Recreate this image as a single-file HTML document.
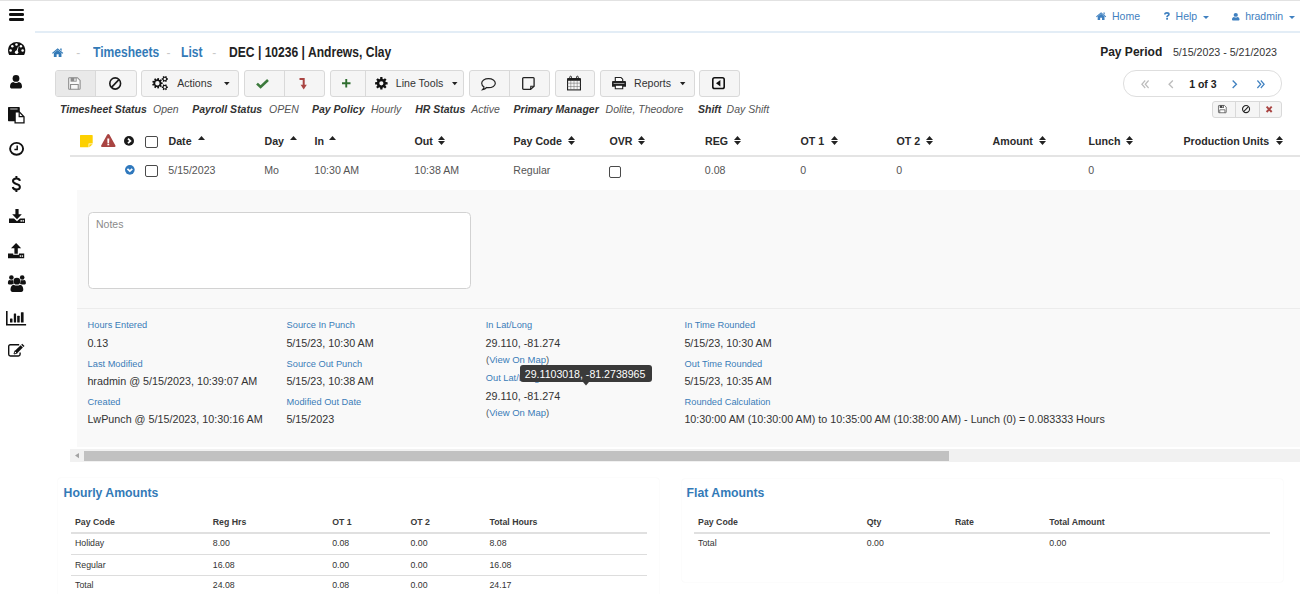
<!DOCTYPE html>
<html><head><meta charset="utf-8"><style>
html,body{margin:0;padding:0;width:1300px;height:594px;overflow:hidden;background:#fff;font-family:"Liberation Sans", sans-serif;}
.t{position:absolute;white-space:pre;line-height:normal;}
.r{position:absolute;box-sizing:border-box;}
.i{position:absolute;overflow:visible;}
</style></head><body>
<div class="r" style="left:0.00px;top:0.00px;width:1300.00px;height:1.00px;background:#e2e2e2"></div>
<div class="r" style="left:35.00px;top:31.00px;width:1265.00px;height:2.00px;background:#e3edf6"></div>
<div class="r" style="left:9.20px;top:8.50px;width:14.70px;height:2.60px;background:#111;border-radius:1.3px"></div>
<div class="r" style="left:9.20px;top:13.30px;width:14.70px;height:2.60px;background:#111;border-radius:1.3px"></div>
<div class="r" style="left:9.20px;top:18.20px;width:14.70px;height:2.60px;background:#111;border-radius:1.3px"></div>
<svg class="i" style="left:8.00px;top:42.20px;width:17.30px;height:13.00px;" viewBox="0 0 17.3 13" preserveAspectRatio="none"><path fill="#111" d="M1.2,13 C-0.6,9.8 -0.4,5.2 2.4,2.5 C4.2,0.8 6.4,0 8.65,0 C10.9,0 13.1,0.8 14.9,2.5 C17.7,5.2 17.9,9.8 16.1,13 Z"/><circle cx="2.6" cy="8.5" r="1.25" fill="#fff"/><circle cx="4.3" cy="4.3" r="1.25" fill="#fff"/><circle cx="8.5" cy="2.5" r="1.25" fill="#fff"/><circle cx="12.9" cy="4.3" r="1.25" fill="#fff"/><circle cx="14.6" cy="8.5" r="1.25" fill="#fff"/><circle cx="8.6" cy="10.3" r="1.7" fill="#fff"/><path fill="#fff" d="M7.9,10.2 L10.1,4.4 L10.6,4.6 L9.4,10.6 Z"/></svg>
<svg class="i" style="left:10.40px;top:75.00px;width:12.00px;height:13.60px;" viewBox="0 0 12 13.6" preserveAspectRatio="none"><circle cx="6" cy="3.4" r="3.4" fill="#111"/><path fill="#111" d="M0,11.6 C0,8.8 1.4,7.2 3.2,7.0 C4.2,7.7 5.0,7.9 6,7.9 C7,7.9 7.8,7.7 8.8,7.0 C10.6,7.2 12,8.8 12,11.6 C12,13.0 11.2,13.6 10,13.6 L2,13.6 C0.8,13.6 0,13.0 0,11.6 Z"/></svg>
<svg class="i" style="left:8.10px;top:107.10px;width:16.60px;height:16.50px;" viewBox="0 0 16.6 16.5" preserveAspectRatio="none"><path fill="#111" d="M0,1 C0,0.4 0.4,0 1,0 L10.8,0 C11.4,0 11.8,0.4 11.8,1 L11.8,14.3 L1,14.3 C0.4,14.3 0,13.9 0,13.3 Z"/><rect x="2.2" y="1.3" width="7.4" height="1.4" fill="#999"/><path fill="#fff" stroke="#111" stroke-width="1.3" d="M7.1,4.9 L11.3,4.9 L16.0,9.8 L16.0,15.9 L7.1,15.9 Z"/><path fill="none" stroke="#111" stroke-width="1.2" d="M11.2,5.1 L11.2,9.6 L15.8,9.6"/></svg>
<svg class="i" style="left:8.80px;top:142.20px;width:15.20px;height:13.60px;" viewBox="0 0 15.2 13.6" preserveAspectRatio="none"><ellipse cx="7.6" cy="6.8" rx="6.5" ry="5.9" fill="none" stroke="#111" stroke-width="1.9"/><path fill="none" stroke="#111" stroke-width="1.5" d="M8.2,3.4 L8.2,7.6 L5.4,7.6"/></svg>
<svg class="i" style="left:12.00px;top:175.80px;width:8.80px;height:16.00px;" viewBox="0 0 8.8 16" preserveAspectRatio="none"><path fill="none" stroke="#111" stroke-width="2.0" d="M7.9,4.9 C7.6,3.3 6.3,2.5 4.4,2.5 C2.4,2.5 1.0,3.5 1.0,5.1 C1.0,6.9 2.6,7.5 4.4,8.0 C6.4,8.5 7.9,9.2 7.9,11.0 C7.9,12.7 6.5,13.6 4.4,13.6 C2.4,13.6 1.1,12.7 0.8,11.0 M4.4,0 L4.4,2.6 M4.4,13.5 L4.4,16"/></svg>
<svg class="i" style="left:8.80px;top:208.60px;width:16.00px;height:14.10px;" viewBox="0 0 16 14.1" preserveAspectRatio="none"><path fill="#111" d="M6.4,0 L9.6,0 L9.6,5.2 L12.8,5.2 L8,10.2 L3.2,5.2 L6.4,5.2 Z"/><path fill="#111" d="M0,9.6 L5.0,9.6 L8,12.2 L11,9.6 L16,9.6 L16,14.1 L0,14.1 Z"/><circle cx="12.2" cy="11.9" r="0.8" fill="#fff"/><circle cx="14.2" cy="11.9" r="0.8" fill="#fff"/></svg>
<svg class="i" style="left:8.30px;top:242.70px;width:16.20px;height:15.30px;" viewBox="0 0 16.2 15.3" preserveAspectRatio="none"><path fill="#111" d="M8.1,0 L13.2,5.2 L9.8,5.2 L9.8,10.8 L6.4,10.8 L6.4,5.2 L3,5.2 Z"/><path fill="#111" d="M0,10.4 L5.2,10.4 L5.2,11.8 L11,11.8 L11,10.4 L16.2,10.4 L16.2,15.3 L0,15.3 Z"/><circle cx="12.4" cy="13.1" r="0.8" fill="#fff"/><circle cx="14.4" cy="13.1" r="0.8" fill="#fff"/></svg>
<svg class="i" style="left:6.60px;top:274.40px;width:19.20px;height:17.90px;" viewBox="0 0 19.2 17.9" preserveAspectRatio="none"><circle cx="9.9" cy="7.2" r="3.4" fill="#111"/><circle cx="4.4" cy="3.5" r="2.3" fill="#111"/><circle cx="15.2" cy="3.5" r="2.3" fill="#111"/><path fill="#111" d="M3.5,15.6 C3.5,12.6 4.8,10.9 6.6,10.7 C7.6,11.3 8.7,11.6 9.9,11.6 C11.1,11.6 12.2,11.3 13.2,10.7 C15,10.9 16.3,12.6 16.3,15.6 C16.3,17.2 15.5,17.9 14.2,17.9 L5.6,17.9 C4.3,17.9 3.5,17.2 3.5,15.6 Z"/><path fill="#111" d="M0.9,9.0 C0.9,7.2 1.6,6.0 2.6,6.0 C3.2,6.3 3.9,6.4 4.6,6.3 C5.2,6.2 5.6,6.1 6.0,5.9 C6.0,7.4 6.3,8.6 7.0,9.6 C6.2,9.9 5.6,10.2 5.1,10.4 L2.0,10.4 C1.3,10.4 0.9,9.9 0.9,9.0 Z"/><path fill="#111" d="M18.9,9.0 C18.9,7.2 18.2,6.0 17.2,6.0 C16.6,6.3 15.9,6.4 15.2,6.3 C14.6,6.2 14.2,6.1 13.8,5.9 C13.8,7.4 13.5,8.6 12.8,9.6 C13.6,9.9 14.2,10.2 14.7,10.4 L17.8,10.4 C18.5,10.4 18.9,9.9 18.9,9.0 Z"/></svg>
<svg class="i" style="left:6.20px;top:310.50px;width:20.10px;height:14.50px;" viewBox="0 0 20.1 14.5" preserveAspectRatio="none"><path fill="#111" d="M0,0 L1.6,0 L1.6,12.9 L20.1,12.9 L20.1,14.5 L0,14.5 Z"/><rect x="4.0" y="7.4" width="2.5" height="4.2" rx="0.5" fill="#111"/><rect x="7.8" y="2.6" width="2.3" height="9.0" rx="0.5" fill="#111"/><rect x="11.2" y="4.8" width="2.5" height="6.8" rx="0.5" fill="#111"/><rect x="14.9" y="1.3" width="2.7" height="10.3" rx="0.5" fill="#111"/></svg>
<svg class="i" style="left:8.10px;top:344.30px;width:16.60px;height:12.70px;" viewBox="0 0 16.6 12.7" preserveAspectRatio="none"><path fill="none" stroke="#111" stroke-width="1.4" d="M11.2,0.7 L2.4,0.7 C1.3,0.7 0.7,1.3 0.7,2.4 L0.7,10.3 C0.7,11.4 1.3,12 2.4,12 L10.4,12 C11.5,12 12.1,11.4 12.1,10.3 L12.1,8.4"/><path fill="#fff" stroke="#111" stroke-width="0.9" d="M9.15,9.14 L6.91,6.86 L6.0,10.0 Z"/><path fill="#111" d="M9.15,9.14 L14.87,3.55 L12.63,1.27 L6.91,6.86 Z"/><path fill="#111" d="M15.44,2.99 L16.51,1.94 L14.27,-0.34 L13.2,0.71 Z"/></svg>
<svg class="i" style="left:1096.00px;top:11.80px;width:10.20px;height:8.10px;" viewBox="0 0 11 9" preserveAspectRatio="none"><path fill="#3f80c0" d="M5.5,0.2 L11,4.9 L10.2,5.7 L5.5,1.7 L0.8,5.7 L0,4.9 Z"/><path fill="#3f80c0" d="M8.0,0.6 L9.4,0.6 L9.4,3.0 L8.0,1.8 Z"/><path fill="#3f80c0" d="M1.8,5.0 L5.5,1.9 L9.2,5.0 L9.2,9 L6.5,9 L6.5,6.3 L4.5,6.3 L4.5,9 L1.8,9 Z"/></svg>
<div class="t" style="left:1112.00px;top:10.10px;font-size:10.5px;font-weight:normal;font-style:normal;color:#3f80c0;">Home</div>
<svg class="i" style="left:1163.80px;top:12.20px;width:5.80px;height:7.70px;" viewBox="0 0 5.8 7.7" preserveAspectRatio="none"><path fill="none" stroke="#3f80c0" stroke-width="1.75" d="M0.9,2.5 C0.9,1.3 1.8,0.9 2.9,0.9 C4.0,0.9 4.9,1.5 4.9,2.4 C4.9,3.5 3.3,3.7 3.1,4.7 L3.1,5.2"/><rect x="2.2" y="6.0" width="1.8" height="1.7" fill="#3f80c0"/></svg>
<div class="t" style="left:1175.60px;top:10.10px;font-size:10.5px;font-weight:normal;font-style:normal;color:#3f80c0;">Help</div>
<svg class="i" style="left:1203.00px;top:16.20px;width:6.00px;height:3.00px;" viewBox="0 0 6 3.4" preserveAspectRatio="none"><path fill="#3f80c0" d="M0,0 L6,0 L3,3.4 Z"/></svg>
<svg class="i" style="left:1232.00px;top:12.60px;width:7.50px;height:7.60px;" viewBox="0 0 12 13.6" preserveAspectRatio="none"><circle cx="6" cy="3.4" r="3.4" fill="#3f80c0"/><path fill="#3f80c0" d="M0,11.6 C0,8.8 1.4,7.2 3.2,7.0 C4.2,7.7 5.0,7.9 6,7.9 C7,7.9 7.8,7.7 8.8,7.0 C10.6,7.2 12,8.8 12,11.6 C12,13.0 11.2,13.6 10,13.6 L2,13.6 C0.8,13.6 0,13.0 0,11.6 Z"/></svg>
<div class="t" style="left:1245.20px;top:10.10px;font-size:10.5px;font-weight:normal;font-style:normal;color:#3f80c0;">hradmin</div>
<svg class="i" style="left:1289.00px;top:16.20px;width:6.00px;height:3.00px;" viewBox="0 0 6 3.4" preserveAspectRatio="none"><path fill="#3f80c0" d="M0,0 L6,0 L3,3.4 Z"/></svg>
<svg class="i" style="left:51.50px;top:47.60px;width:11.30px;height:9.00px;" viewBox="0 0 11 9" preserveAspectRatio="none"><path fill="#337ab7" d="M5.5,0.2 L11,4.9 L10.2,5.7 L5.5,1.7 L0.8,5.7 L0,4.9 Z"/><path fill="#337ab7" d="M8.0,0.6 L9.4,0.6 L9.4,3.0 L8.0,1.8 Z"/><path fill="#337ab7" d="M1.8,5.0 L5.5,1.9 L9.2,5.0 L9.2,9 L6.5,9 L6.5,6.3 L4.5,6.3 L4.5,9 L1.8,9 Z"/></svg>
<div class="t" style="left:76.20px;top:45.74px;font-size:12px;font-weight:normal;font-style:normal;color:#c8c8c8;">-</div>
<div class="t" style="left:93.10px;top:43.81px;font-size:13.91px;font-weight:bold;font-style:normal;color:#337ab7;transform:scaleX(0.8696);transform-origin:0 0;">Timesheets</div>
<div class="t" style="left:166.40px;top:45.74px;font-size:12px;font-weight:normal;font-style:normal;color:#c8c8c8;">-</div>
<div class="t" style="left:181.20px;top:43.81px;font-size:13.91px;font-weight:bold;font-style:normal;color:#337ab7;transform:scaleX(0.8696);transform-origin:0 0;">List</div>
<div class="t" style="left:212.20px;top:45.74px;font-size:12px;font-weight:normal;font-style:normal;color:#c8c8c8;">-</div>
<div class="t" style="left:228.80px;top:43.81px;font-size:13.91px;font-weight:bold;font-style:normal;color:#222;transform:scaleX(0.8696);transform-origin:0 0;">DEC | 10236 | Andrews, Clay</div>
<div class="t" style="left:1100.20px;top:44.94px;font-size:12px;font-weight:bold;font-style:normal;color:#222;">Pay Period</div>
<div class="t" style="left:1172.90px;top:46.16px;font-size:10.65px;font-weight:normal;font-style:normal;color:#333;">5/15/2023 - 5/21/2023</div>
<div class="r" style="left:55.30px;top:70.10px;width:81.40px;height:26.50px;background:#f5f5f5;border:1px solid #d9d9d9;border-radius:3px;"></div>
<div class="r" style="left:56.30px;top:71.10px;width:38.70px;height:24.50px;background:#e9e9e9;border-radius:2px 0 0 2px"></div>
<div class="r" style="left:95.00px;top:70.10px;width:1.00px;height:26.50px;background:#d9d9d9"></div>
<div class="r" style="left:141.40px;top:70.10px;width:97.70px;height:26.50px;background:#f5f5f5;border:1px solid #d9d9d9;border-radius:3px;"></div>
<div class="r" style="left:243.80px;top:70.10px;width:81.20px;height:26.50px;background:#f5f5f5;border:1px solid #d9d9d9;border-radius:3px;"></div>
<div class="r" style="left:284.00px;top:70.10px;width:1.00px;height:26.50px;background:#d9d9d9"></div>
<div class="r" style="left:329.50px;top:70.10px;width:134.50px;height:26.50px;background:#f5f5f5;border:1px solid #d9d9d9;border-radius:3px;"></div>
<div class="r" style="left:365.00px;top:70.10px;width:1.00px;height:26.50px;background:#d9d9d9"></div>
<div class="r" style="left:469.00px;top:70.10px;width:81.20px;height:26.50px;background:#f5f5f5;border:1px solid #d9d9d9;border-radius:3px;"></div>
<div class="r" style="left:508.90px;top:70.10px;width:1.00px;height:26.50px;background:#d9d9d9"></div>
<div class="r" style="left:554.50px;top:70.10px;width:40.50px;height:26.50px;background:#f5f5f5;border:1px solid #d9d9d9;border-radius:3px;"></div>
<div class="r" style="left:599.60px;top:70.10px;width:95.00px;height:26.50px;background:#f5f5f5;border:1px solid #d9d9d9;border-radius:3px;"></div>
<div class="r" style="left:699.30px;top:70.10px;width:40.70px;height:26.50px;background:#f5f5f5;border:1px solid #d9d9d9;border-radius:3px;"></div>
<svg class="i" style="left:68.20px;top:77.10px;width:12.80px;height:12.90px;" viewBox="0 0 13 13" preserveAspectRatio="none"><path fill="#f8f8f8" stroke="#8c8c8c" stroke-width="1.1" d="M0.7,1.4 C0.7,1 1,0.7 1.4,0.7 L9.6,0.7 L12.3,3.4 L12.3,11.6 C12.3,12 12,12.3 11.6,12.3 L1.4,12.3 C1,12.3 0.7,12 0.7,11.6 Z"/><rect x="2.6" y="0.7" width="6.2" height="4.0" fill="#8c8c8c"/><rect x="6.4" y="1.5" width="1.4" height="2.4" fill="#f4f4f4"/><path fill="none" stroke="#8c8c8c" stroke-width="1.1" d="M2.6,12.3 L2.6,7.6 L10.4,7.6 L10.4,12.3"/></svg>
<svg class="i" style="left:108.70px;top:77.10px;width:12.40px;height:12.90px;" viewBox="0 0 12.4 12.4" preserveAspectRatio="none"><circle cx="6.2" cy="6.2" r="5.4" fill="none" stroke="#1a1a1a" stroke-width="1.6"/><path stroke="#1a1a1a" stroke-width="1.6" d="M2.5,9.9 L9.9,2.5"/></svg>
<svg class="i" style="left:152.00px;top:76.40px;width:16.00px;height:14.00px;" viewBox="0 0 16 14" preserveAspectRatio="none"><path fill="#111" fill-rule="evenodd" d="M9.19,6.27 L10.64,6.39 L10.64,8.01 L9.19,8.13 L8.90,8.92 L9.93,9.95 L8.89,11.19 L7.71,10.35 L6.97,10.77 L7.11,12.22 L5.51,12.50 L5.14,11.09 L4.31,10.94 L3.48,12.14 L2.08,11.33 L2.70,10.02 L2.16,9.37 L0.76,9.75 L0.20,8.23 L1.52,7.62 L1.52,6.78 L0.20,6.17 L0.76,4.65 L2.16,5.03 L2.70,4.38 L2.08,3.07 L3.48,2.26 L4.31,3.46 L5.14,3.31 L5.51,1.90 L7.11,2.18 L6.97,3.63 L7.71,4.05 L8.89,3.21 L9.93,4.45 L8.90,5.48 Z M7.60,7.20 A2.2,2.2 0 1 0 3.20,7.20 A2.2,2.2 0 1 0 7.60,7.20 Z"/><path fill="#111" fill-rule="evenodd" d="M14.95,2.19 L15.92,2.27 L15.92,3.73 L14.95,3.81 L14.58,4.46 L14.99,5.33 L13.72,6.06 L13.17,5.27 L12.43,5.27 L11.88,6.06 L10.61,5.33 L11.02,4.46 L10.65,3.81 L9.68,3.73 L9.68,2.27 L10.65,2.19 L11.02,1.54 L10.61,0.67 L11.88,-0.06 L12.43,0.73 L13.17,0.73 L13.72,-0.06 L14.99,0.67 L14.58,1.54 Z M14.00,3.00 A1.2,1.2 0 1 0 11.60,3.00 A1.2,1.2 0 1 0 14.00,3.00 Z"/><path fill="#111" fill-rule="evenodd" d="M14.86,10.43 L15.82,10.49 L15.82,11.91 L14.86,11.97 L14.50,12.60 L14.92,13.46 L13.70,14.17 L13.16,13.37 L12.44,13.37 L11.90,14.17 L10.68,13.46 L11.10,12.60 L10.74,11.97 L9.78,11.91 L9.78,10.49 L10.74,10.43 L11.10,9.80 L10.68,8.94 L11.90,8.23 L12.44,9.03 L13.16,9.03 L13.70,8.23 L14.92,8.94 L14.50,9.80 Z M14.00,11.20 A1.2,1.2 0 1 0 11.60,11.20 A1.2,1.2 0 1 0 14.00,11.20 Z"/></svg>
<div class="t" style="left:177.20px;top:77.31px;font-size:10.6px;font-weight:normal;font-style:normal;color:#333;">Actions</div>
<svg class="i" style="left:223.90px;top:82.40px;width:5.60px;height:3.20px;" viewBox="0 0 6 3.4" preserveAspectRatio="none"><path fill="#222" d="M0,0 L6,0 L3,3.4 Z"/></svg>
<svg class="i" style="left:256.00px;top:79.00px;width:13.00px;height:9.50px;" viewBox="0 0 13 9.5" preserveAspectRatio="none"><path fill="none" stroke="#3c7a3c" stroke-width="2.6" d="M1,4.6 L4.6,8 L12,1"/></svg>
<svg class="i" style="left:298.50px;top:78.00px;width:9.50px;height:11.50px;" viewBox="0 0 9.5 11.5" preserveAspectRatio="none"><path fill="none" stroke="#a94442" stroke-width="2" d="M0.5,1 L4.7,1 L4.7,7.5"/><path fill="#a94442" d="M1.6,6.8 L7.8,6.8 L4.7,11.5 Z"/></svg>
<svg class="i" style="left:341.50px;top:78.50px;width:8.50px;height:8.50px;" viewBox="0 0 8.5 8.5" preserveAspectRatio="none"><path fill="#2f6e30" d="M3.3,0 L5.2,0 L5.2,3.3 L8.5,3.3 L8.5,5.2 L5.2,5.2 L5.2,8.5 L3.3,8.5 L3.3,5.2 L0,5.2 L0,3.3 L3.3,3.3 Z"/></svg>
<svg class="i" style="left:374.80px;top:77.30px;width:12.70px;height:12.70px;" viewBox="0 0 12.7 12.7" preserveAspectRatio="none"><path fill="#111" fill-rule="evenodd" d="M10.78,5.12 L12.61,5.26 L12.61,7.44 L10.78,7.58 L10.35,8.62 L11.55,10.00 L10.00,11.55 L8.62,10.35 L7.58,10.78 L7.44,12.61 L5.26,12.61 L5.12,10.78 L4.08,10.35 L2.70,11.55 L1.15,10.00 L2.35,8.62 L1.92,7.58 L0.09,7.44 L0.09,5.26 L1.92,5.12 L2.35,4.08 L1.15,2.70 L2.70,1.15 L4.08,2.35 L5.12,1.92 L5.26,0.09 L7.44,0.09 L7.58,1.92 L8.62,2.35 L10.00,1.15 L11.55,2.70 L10.35,4.08 Z M8.45,6.35 A2.1,2.1 0 1 0 4.25,6.35 A2.1,2.1 0 1 0 8.45,6.35 Z"/></svg>
<div class="t" style="left:395.80px;top:77.31px;font-size:10.6px;font-weight:normal;font-style:normal;color:#333;">Line Tools</div>
<svg class="i" style="left:452.20px;top:82.40px;width:5.50px;height:3.20px;" viewBox="0 0 6 3.4" preserveAspectRatio="none"><path fill="#222" d="M0,0 L6,0 L3,3.4 Z"/></svg>
<svg class="i" style="left:480.60px;top:78.00px;width:15.00px;height:12.40px;" viewBox="0 0 15 12.4" preserveAspectRatio="none"><path fill="none" stroke="#222" stroke-width="1.2" d="M7.5,0.7 C11.4,0.7 14.3,2.7 14.3,5.2 C14.3,7.7 11.4,9.7 7.5,9.7 C6.8,9.7 6.2,9.6 5.6,9.5 C4.6,10.6 3.2,11.3 1.6,11.6 C2.4,10.8 2.9,9.9 3.0,8.9 C1.5,8.0 0.7,6.7 0.7,5.2 C0.7,2.7 3.6,0.7 7.5,0.7 Z"/></svg>
<svg class="i" style="left:522.00px;top:77.00px;width:12.80px;height:13.00px;" viewBox="0 0 12.8 13" preserveAspectRatio="none"><path fill="none" stroke="#222" stroke-width="1.3" d="M1.6,0.7 L11.2,0.7 C11.7,0.7 12.1,1.1 12.1,1.6 L12.1,9.2 L8.6,12.3 L1.6,12.3 C1.1,12.3 0.7,11.9 0.7,11.4 L0.7,1.6 C0.7,1.1 1.1,0.7 1.6,0.7 Z"/><path fill="none" stroke="#222" stroke-width="1.1" d="M12.1,9.2 L8.8,9.2 L8.6,12.3"/></svg>
<svg class="i" style="left:566.80px;top:75.90px;width:14.00px;height:14.50px;" viewBox="0 0 14 14.5" preserveAspectRatio="none"><path fill="#222" d="M0,3.0 C0,2.5 0.4,2.1 0.9,2.1 L13.1,2.1 C13.6,2.1 14,2.5 14,3.0 L14,4.6 L0,4.6 Z"/><rect x="0.55" y="4" width="12.9" height="9.9" fill="none" stroke="#222" stroke-width="1.1"/><path stroke="#666" stroke-width="0.5" d="M3.8,4.5 L3.8,13.5 M7,4.5 L7,13.5 M10.2,4.5 L10.2,13.5 M0.6,7.2 L13.4,7.2 M0.6,10.5 L13.4,10.5"/><rect x="2.7" y="0.2" width="1.8" height="3.6" rx="0.9" fill="none" stroke="#222" stroke-width="0.9"/><rect x="9.5" y="0.2" width="1.8" height="3.6" rx="0.9" fill="none" stroke="#222" stroke-width="0.9"/></svg>
<svg class="i" style="left:612.00px;top:77.30px;width:14.00px;height:12.30px;" viewBox="0 0 14 12.3" preserveAspectRatio="none"><path fill="#fff" stroke="#222" stroke-width="1.1" d="M3.3,4.4 L3.3,0.55 L9.0,0.55 L10.7,2.2 L10.7,4.4"/><path fill="#222" d="M1.2,4.0 L12.8,4.0 C13.5,4.0 14,4.5 14,5.2 L14,9.8 L0,9.8 L0,5.2 C0,4.5 0.5,4.0 1.2,4.0 Z"/><rect x="1.6" y="6.1" width="10.8" height="0.9" fill="#aaa"/><path fill="#fff" stroke="#222" stroke-width="1.1" d="M3.3,8.2 L3.3,11.75 L10.7,11.75 L10.7,8.2 Z"/></svg>
<div class="t" style="left:634.00px;top:77.31px;font-size:10.6px;font-weight:normal;font-style:normal;color:#333;">Reports</div>
<svg class="i" style="left:679.60px;top:82.40px;width:5.40px;height:3.20px;" viewBox="0 0 6 3.4" preserveAspectRatio="none"><path fill="#222" d="M0,0 L6,0 L3,3.4 Z"/></svg>
<svg class="i" style="left:711.80px;top:77.30px;width:13.00px;height:12.30px;" viewBox="0 0 13 12.3" preserveAspectRatio="none"><rect x="0.8" y="0.8" width="11.4" height="10.7" rx="1.8" fill="none" stroke="#111" stroke-width="1.6"/><path fill="#111" d="M8.4,2.9 L8.4,9.4 L4.0,6.15 Z"/></svg>
<div class="r" style="left:1123.00px;top:70.40px;width:159.00px;height:26.20px;border:1px solid #dedede;border-radius:13px;background:#fff"></div>
<svg class="i" style="left:1140.60px;top:79.80px;width:8.00px;height:8.50px;" viewBox="0 0 8 7.4" preserveAspectRatio="none"><path fill="none" stroke="#bcbcbc" stroke-width="1.2" d="M4.2,0.4 L0.9,3.7 L4.2,7 M7.6,0.4 L4.3,3.7 L7.6,7"/></svg>
<svg class="i" style="left:1168.00px;top:79.80px;width:5.50px;height:8.50px;" viewBox="0 0 5 7.4" preserveAspectRatio="none"><path fill="none" stroke="#bcbcbc" stroke-width="1.2" d="M4.4,0.4 L1,3.7 L4.4,7"/></svg>
<div class="t" style="left:1189.20px;top:77.60px;font-size:10.5px;font-weight:bold;font-style:normal;color:#222;">1 of 3</div>
<svg class="i" style="left:1232.00px;top:79.80px;width:5.50px;height:8.50px;" viewBox="0 0 5 7.4" preserveAspectRatio="none"><path fill="none" stroke="#3f80c0" stroke-width="1.2" d="M0.6,0.4 L4,3.7 L0.6,7"/></svg>
<svg class="i" style="left:1257.00px;top:79.80px;width:8.00px;height:8.50px;" viewBox="0 0 8 7.4" preserveAspectRatio="none"><path fill="none" stroke="#3f80c0" stroke-width="1.2" d="M0.4,0.4 L3.7,3.7 L0.4,7 M3.8,0.4 L7.1,3.7 L3.8,7"/></svg>
<div class="r" style="left:1212.00px;top:101.00px;width:70.00px;height:16.50px;background:#f5f5f5;border:1px solid #d9d9d9;border-radius:3px;"></div>
<div class="r" style="left:1235.00px;top:101.00px;width:1.00px;height:16.50px;background:#d9d9d9"></div>
<div class="r" style="left:1258.50px;top:101.00px;width:1.00px;height:16.50px;background:#d9d9d9"></div>
<svg class="i" style="left:1218.00px;top:105.40px;width:8.70px;height:8.20px;" viewBox="0 0 13 13" preserveAspectRatio="none"><path fill="#fff" stroke="#444" stroke-width="1.1" d="M0.7,1.4 C0.7,1 1,0.7 1.4,0.7 L9.6,0.7 L12.3,3.4 L12.3,11.6 C12.3,12 12,12.3 11.6,12.3 L1.4,12.3 C1,12.3 0.7,12 0.7,11.6 Z"/><rect x="2.6" y="0.7" width="6.2" height="4.0" fill="#444"/><rect x="6.4" y="1.5" width="1.4" height="2.4" fill="#f4f4f4"/><path fill="none" stroke="#444" stroke-width="1.1" d="M2.6,12.3 L2.6,7.6 L10.4,7.6 L10.4,12.3"/></svg>
<svg class="i" style="left:1241.50px;top:105.40px;width:8.10px;height:8.20px;" viewBox="0 0 12.4 12.4" preserveAspectRatio="none"><circle cx="6.2" cy="6.2" r="5.4" fill="none" stroke="#222" stroke-width="1.7"/><path stroke="#222" stroke-width="1.7" d="M2.5,9.9 L9.9,2.5"/></svg>
<svg class="i" style="left:1265.50px;top:105.80px;width:6.30px;height:6.60px;" viewBox="0 0 6.3 6.6" preserveAspectRatio="none"><path stroke="#a94442" stroke-width="1.9" d="M0.6,0.6 L5.7,6 M5.7,0.6 L0.6,6"/></svg>
<div class="t" style="left:60.00px;top:103.00px;font-size:10.5px;font-weight:bold;font-style:italic;color:#333;">Timesheet Status</div>
<div class="t" style="left:153.00px;top:103.00px;font-size:10.5px;font-weight:normal;font-style:italic;color:#555;">Open</div>
<div class="t" style="left:192.20px;top:103.00px;font-size:10.5px;font-weight:bold;font-style:italic;color:#333;">Payroll Status</div>
<div class="t" style="left:269.00px;top:103.00px;font-size:10.5px;font-weight:normal;font-style:italic;color:#555;">OPEN</div>
<div class="t" style="left:312.00px;top:103.00px;font-size:10.5px;font-weight:bold;font-style:italic;color:#333;">Pay Policy</div>
<div class="t" style="left:371.00px;top:103.00px;font-size:10.5px;font-weight:normal;font-style:italic;color:#555;">Hourly</div>
<div class="t" style="left:415.20px;top:103.00px;font-size:10.5px;font-weight:bold;font-style:italic;color:#333;">HR Status</div>
<div class="t" style="left:471.20px;top:103.00px;font-size:10.5px;font-weight:normal;font-style:italic;color:#555;">Active</div>
<div class="t" style="left:513.60px;top:103.00px;font-size:10.5px;font-weight:bold;font-style:italic;color:#333;">Primary Manager</div>
<div class="t" style="left:605.60px;top:103.00px;font-size:10.5px;font-weight:normal;font-style:italic;color:#555;">Dolite, Theodore</div>
<div class="t" style="left:698.00px;top:103.00px;font-size:10.5px;font-weight:bold;font-style:italic;color:#333;">Shift</div>
<div class="t" style="left:726.60px;top:103.00px;font-size:10.5px;font-weight:normal;font-style:italic;color:#555;">Day Shift</div>
<svg class="i" style="left:79.50px;top:134.70px;width:12.70px;height:12.30px;" viewBox="0 0 12.7 12.3" preserveAspectRatio="none"><path fill="#fdd000" d="M0.6,0 L12.1,0 C12.4,0 12.7,0.3 12.7,0.6 L12.7,8.6 L8.6,8.6 L8.6,12.3 L0.6,12.3 C0.3,12.3 0,12 0,11.7 L0,0.6 C0,0.3 0.3,0 0.6,0 Z"/><path fill="#fdd000" d="M9.3,9.3 L12.7,9.3 L9.3,12.3 Z"/></svg>
<svg class="i" style="left:101.20px;top:133.70px;width:14.60px;height:13.10px;" viewBox="0 0 14.6 13.1" preserveAspectRatio="none"><path fill="#a94442" d="M7.3,0 C7.8,0 8.2,0.3 8.5,0.8 L14.4,11.6 C14.8,12.3 14.4,13.1 13.6,13.1 L1,13.1 C0.2,13.1 -0.2,12.3 0.2,11.6 L6.1,0.8 C6.4,0.3 6.8,0 7.3,0 Z"/><path fill="#fff" d="M6.3,4.4 L8.3,4.4 L8.1,9.0 L6.5,9.0 Z"/><rect x="6.4" y="9.6" width="1.8" height="1.7" fill="#fff"/></svg>
<svg class="i" style="left:124.40px;top:136.20px;width:10.00px;height:9.80px;" viewBox="0 0 10 10" preserveAspectRatio="none"><circle cx="5" cy="5" r="5" fill="#1a1a1a"/><path fill="none" stroke="#fff" stroke-width="1.8" d="M4,2.6 L6.4,5 L4,7.4"/></svg>
<div class="r" style="left:145.30px;top:135.80px;width:12.50px;height:12.00px;border:1.3px solid #4a4a4a;border-radius:2px;background:#fff"></div>
<div class="t" style="left:168.50px;top:134.96px;font-size:10.65px;font-weight:bold;font-style:normal;color:#2a2a2a;">Date</div>
<svg class="i" style="left:198.10px;top:136.20px;width:7.00px;height:4.10px;" viewBox="0 0 6 3.4" preserveAspectRatio="none"><path fill="#222" d="M0,3.4 L6,3.4 L3,0 Z"/></svg>
<div class="t" style="left:264.50px;top:134.96px;font-size:10.65px;font-weight:bold;font-style:normal;color:#2a2a2a;">Day</div>
<svg class="i" style="left:290.10px;top:136.20px;width:7.00px;height:4.10px;" viewBox="0 0 6 3.4" preserveAspectRatio="none"><path fill="#222" d="M0,3.4 L6,3.4 L3,0 Z"/></svg>
<div class="t" style="left:314.50px;top:134.96px;font-size:10.65px;font-weight:bold;font-style:normal;color:#2a2a2a;">In</div>
<svg class="i" style="left:329.40px;top:136.20px;width:7.00px;height:4.10px;" viewBox="0 0 6 3.4" preserveAspectRatio="none"><path fill="#222" d="M0,3.4 L6,3.4 L3,0 Z"/></svg>
<div class="t" style="left:414.50px;top:134.96px;font-size:10.65px;font-weight:bold;font-style:normal;color:#2a2a2a;">Out</div>
<svg class="i" style="left:438.20px;top:136.20px;width:7.00px;height:4.10px;" viewBox="0 0 6 3.4" preserveAspectRatio="none"><path fill="#222" d="M0,3.4 L6,3.4 L3,0 Z"/></svg>
<svg class="i" style="left:438.20px;top:141.10px;width:7.00px;height:4.10px;" viewBox="0 0 6 3.4" preserveAspectRatio="none"><path fill="#222" d="M0,0 L6,0 L3,3.4 Z"/></svg>
<div class="t" style="left:513.50px;top:134.96px;font-size:10.65px;font-weight:bold;font-style:normal;color:#2a2a2a;">Pay Code</div>
<svg class="i" style="left:567.80px;top:136.20px;width:7.00px;height:4.10px;" viewBox="0 0 6 3.4" preserveAspectRatio="none"><path fill="#222" d="M0,3.4 L6,3.4 L3,0 Z"/></svg>
<svg class="i" style="left:567.80px;top:141.10px;width:7.00px;height:4.10px;" viewBox="0 0 6 3.4" preserveAspectRatio="none"><path fill="#222" d="M0,0 L6,0 L3,3.4 Z"/></svg>
<div class="t" style="left:609.50px;top:134.96px;font-size:10.65px;font-weight:bold;font-style:normal;color:#2a2a2a;">OVR</div>
<svg class="i" style="left:638.40px;top:136.20px;width:7.00px;height:4.10px;" viewBox="0 0 6 3.4" preserveAspectRatio="none"><path fill="#222" d="M0,3.4 L6,3.4 L3,0 Z"/></svg>
<svg class="i" style="left:638.40px;top:141.10px;width:7.00px;height:4.10px;" viewBox="0 0 6 3.4" preserveAspectRatio="none"><path fill="#222" d="M0,0 L6,0 L3,3.4 Z"/></svg>
<div class="t" style="left:705.00px;top:134.96px;font-size:10.65px;font-weight:bold;font-style:normal;color:#2a2a2a;">REG</div>
<svg class="i" style="left:734.30px;top:136.20px;width:7.00px;height:4.10px;" viewBox="0 0 6 3.4" preserveAspectRatio="none"><path fill="#222" d="M0,3.4 L6,3.4 L3,0 Z"/></svg>
<svg class="i" style="left:734.30px;top:141.10px;width:7.00px;height:4.10px;" viewBox="0 0 6 3.4" preserveAspectRatio="none"><path fill="#222" d="M0,0 L6,0 L3,3.4 Z"/></svg>
<div class="t" style="left:800.50px;top:134.96px;font-size:10.65px;font-weight:bold;font-style:normal;color:#2a2a2a;">OT 1</div>
<svg class="i" style="left:830.80px;top:136.20px;width:7.00px;height:4.10px;" viewBox="0 0 6 3.4" preserveAspectRatio="none"><path fill="#222" d="M0,3.4 L6,3.4 L3,0 Z"/></svg>
<svg class="i" style="left:830.80px;top:141.10px;width:7.00px;height:4.10px;" viewBox="0 0 6 3.4" preserveAspectRatio="none"><path fill="#222" d="M0,0 L6,0 L3,3.4 Z"/></svg>
<div class="t" style="left:896.50px;top:134.96px;font-size:10.65px;font-weight:bold;font-style:normal;color:#2a2a2a;">OT 2</div>
<svg class="i" style="left:926.30px;top:136.20px;width:7.00px;height:4.10px;" viewBox="0 0 6 3.4" preserveAspectRatio="none"><path fill="#222" d="M0,3.4 L6,3.4 L3,0 Z"/></svg>
<svg class="i" style="left:926.30px;top:141.10px;width:7.00px;height:4.10px;" viewBox="0 0 6 3.4" preserveAspectRatio="none"><path fill="#222" d="M0,0 L6,0 L3,3.4 Z"/></svg>
<div class="t" style="left:992.50px;top:134.96px;font-size:10.65px;font-weight:bold;font-style:normal;color:#2a2a2a;">Amount</div>
<svg class="i" style="left:1038.60px;top:136.20px;width:7.00px;height:4.10px;" viewBox="0 0 6 3.4" preserveAspectRatio="none"><path fill="#222" d="M0,3.4 L6,3.4 L3,0 Z"/></svg>
<svg class="i" style="left:1038.60px;top:141.10px;width:7.00px;height:4.10px;" viewBox="0 0 6 3.4" preserveAspectRatio="none"><path fill="#222" d="M0,0 L6,0 L3,3.4 Z"/></svg>
<div class="t" style="left:1088.50px;top:134.96px;font-size:10.65px;font-weight:bold;font-style:normal;color:#2a2a2a;">Lunch</div>
<svg class="i" style="left:1126.20px;top:136.20px;width:7.00px;height:4.10px;" viewBox="0 0 6 3.4" preserveAspectRatio="none"><path fill="#222" d="M0,3.4 L6,3.4 L3,0 Z"/></svg>
<svg class="i" style="left:1126.20px;top:141.10px;width:7.00px;height:4.10px;" viewBox="0 0 6 3.4" preserveAspectRatio="none"><path fill="#222" d="M0,0 L6,0 L3,3.4 Z"/></svg>
<div class="t" style="left:1183.50px;top:134.96px;font-size:10.65px;font-weight:bold;font-style:normal;color:#2a2a2a;">Production Units</div>
<svg class="i" style="left:1275.80px;top:136.20px;width:7.00px;height:4.10px;" viewBox="0 0 6 3.4" preserveAspectRatio="none"><path fill="#222" d="M0,3.4 L6,3.4 L3,0 Z"/></svg>
<svg class="i" style="left:1275.80px;top:141.10px;width:7.00px;height:4.10px;" viewBox="0 0 6 3.4" preserveAspectRatio="none"><path fill="#222" d="M0,0 L6,0 L3,3.4 Z"/></svg>
<div class="r" style="left:70.00px;top:155.00px;width:1230.00px;height:2.00px;background:#e4e4e4"></div>
<svg class="i" style="left:124.60px;top:164.90px;width:9.70px;height:9.70px;" viewBox="0 0 10 10" preserveAspectRatio="none"><circle cx="5" cy="5" r="5" fill="#2f78bd"/><path fill="none" stroke="#fff" stroke-width="1.8" d="M2.5,3.9 L5,6.3 L7.5,3.9"/></svg>
<div class="r" style="left:145.30px;top:165.00px;width:12.50px;height:12.00px;border:1.3px solid #4a4a4a;border-radius:2px;background:#fff"></div>
<div class="t" style="left:168.30px;top:164.21px;font-size:10.6px;font-weight:normal;font-style:normal;color:#555;">5/15/2023</div>
<div class="t" style="left:264.30px;top:164.21px;font-size:10.6px;font-weight:normal;font-style:normal;color:#555;">Mo</div>
<div class="t" style="left:314.30px;top:164.21px;font-size:10.6px;font-weight:normal;font-style:normal;color:#555;">10:30 AM</div>
<div class="t" style="left:414.30px;top:164.21px;font-size:10.6px;font-weight:normal;font-style:normal;color:#555;">10:38 AM</div>
<div class="t" style="left:513.30px;top:164.21px;font-size:10.6px;font-weight:normal;font-style:normal;color:#555;">Regular</div>
<div class="t" style="left:704.80px;top:164.21px;font-size:10.6px;font-weight:normal;font-style:normal;color:#555;">0.08</div>
<div class="t" style="left:800.30px;top:164.21px;font-size:10.6px;font-weight:normal;font-style:normal;color:#555;">0</div>
<div class="t" style="left:896.30px;top:164.21px;font-size:10.6px;font-weight:normal;font-style:normal;color:#555;">0</div>
<div class="t" style="left:1088.30px;top:164.21px;font-size:10.6px;font-weight:normal;font-style:normal;color:#555;">0</div>
<div class="r" style="left:609.00px;top:165.60px;width:12.40px;height:12.00px;border:1.3px solid #4a4a4a;border-radius:2px;background:#fff"></div>
<div class="r" style="left:76.70px;top:189.60px;width:1223.30px;height:257.20px;background:#f9f9f9"></div>
<div class="r" style="left:88.30px;top:212.40px;width:382.30px;height:76.40px;background:#fff;border:1px solid #d2d2d2;border-radius:4.5px"></div>
<div class="t" style="left:96.00px;top:217.90px;font-size:10.5px;font-weight:normal;font-style:normal;color:#8a8a8a;">Notes</div>
<div class="r" style="left:76.70px;top:307.80px;width:1223.30px;height:1.00px;background:#ececec"></div>
<div class="t" style="left:87.60px;top:320.13px;font-size:9.25px;font-weight:normal;font-style:normal;color:#3a7cb8;">Hours Entered</div>
<div class="t" style="left:87.40px;top:336.87px;font-size:10.75px;font-weight:normal;font-style:normal;color:#333;">0.13</div>
<div class="t" style="left:87.60px;top:358.53px;font-size:9.25px;font-weight:normal;font-style:normal;color:#3a7cb8;">Last Modified</div>
<div class="t" style="left:87.40px;top:374.97px;font-size:10.75px;font-weight:normal;font-style:normal;color:#333;">hradmin @ 5/15/2023, 10:39:07 AM</div>
<div class="t" style="left:87.60px;top:396.63px;font-size:9.25px;font-weight:normal;font-style:normal;color:#3a7cb8;">Created</div>
<div class="t" style="left:87.40px;top:413.07px;font-size:10.75px;font-weight:normal;font-style:normal;color:#333;">LwPunch @ 5/15/2023, 10:30:16 AM</div>
<div class="t" style="left:286.60px;top:320.13px;font-size:9.25px;font-weight:normal;font-style:normal;color:#3a7cb8;">Source In Punch</div>
<div class="t" style="left:286.40px;top:336.87px;font-size:10.75px;font-weight:normal;font-style:normal;color:#333;">5/15/23, 10:30 AM</div>
<div class="t" style="left:286.60px;top:358.53px;font-size:9.25px;font-weight:normal;font-style:normal;color:#3a7cb8;">Source Out Punch</div>
<div class="t" style="left:286.40px;top:374.97px;font-size:10.75px;font-weight:normal;font-style:normal;color:#333;">5/15/23, 10:38 AM</div>
<div class="t" style="left:286.60px;top:396.63px;font-size:9.25px;font-weight:normal;font-style:normal;color:#3a7cb8;">Modified Out Date</div>
<div class="t" style="left:286.40px;top:413.07px;font-size:10.75px;font-weight:normal;font-style:normal;color:#333;">5/15/2023</div>
<div class="t" style="left:485.80px;top:320.13px;font-size:9.25px;font-weight:normal;font-style:normal;color:#3a7cb8;">In Lat/Long</div>
<div class="t" style="left:485.60px;top:336.87px;font-size:10.75px;font-weight:normal;font-style:normal;color:#333;">29.110, -81.274</div>
<div class="t" style="left:485.80px;top:354.03px;font-size:9.25px;font-weight:normal;font-style:normal;color:#3a7cb8;"></div>
<div class="t" style="left:485.80px;top:373.43px;font-size:9.25px;font-weight:normal;font-style:normal;color:#3a7cb8;">Out Lat/Long</div>
<div class="t" style="left:485.60px;top:390.47px;font-size:10.75px;font-weight:normal;font-style:normal;color:#333;">29.110, -81.274</div>
<div class="t" style="left:486.00px;top:353.80px;font-size:9.5px;font-weight:normal;font-style:normal;color:#555;">(<span style="color:#3a7cb8">View On Map</span>)</div>
<div class="t" style="left:486.00px;top:407.40px;font-size:9.5px;font-weight:normal;font-style:normal;color:#555;">(<span style="color:#3a7cb8">View On Map</span>)</div>
<div class="t" style="left:684.60px;top:320.13px;font-size:9.25px;font-weight:normal;font-style:normal;color:#3a7cb8;">In Time Rounded</div>
<div class="t" style="left:684.40px;top:336.87px;font-size:10.75px;font-weight:normal;font-style:normal;color:#333;">5/15/23, 10:30 AM</div>
<div class="t" style="left:684.60px;top:358.53px;font-size:9.25px;font-weight:normal;font-style:normal;color:#3a7cb8;">Out Time Rounded</div>
<div class="t" style="left:684.40px;top:374.97px;font-size:10.75px;font-weight:normal;font-style:normal;color:#333;">5/15/23, 10:35 AM</div>
<div class="t" style="left:684.60px;top:396.63px;font-size:9.25px;font-weight:normal;font-style:normal;color:#3a7cb8;">Rounded Calculation</div>
<div class="t" style="left:684.40px;top:413.07px;font-size:10.75px;font-weight:normal;font-style:normal;color:#333;">10:30:00 AM (10:30:00 AM) to 10:35:00 AM (10:38:00 AM) - Lunch (0) = 0.083333 Hours</div>
<div class="r" style="left:520.00px;top:365.30px;width:131.80px;height:17.20px;background:#3a3a3a;border-radius:3px"></div>
<svg class="i" style="left:582.50px;top:382.40px;width:6.00px;height:3.60px;" viewBox="0 0 6 3.6" preserveAspectRatio="none"><path fill="#3a3a3a" d="M0,0 L6,0 L3,3.6 Z"/></svg>
<div class="t" style="left:524.80px;top:368.41px;font-size:10.6px;font-weight:normal;font-style:normal;color:#fff;">29.1103018, -81.2738965</div>
<div class="r" style="left:70.40px;top:449.20px;width:1229.60px;height:12.40px;background:#f1f1f1"></div>
<svg class="i" style="left:74.60px;top:452.80px;width:4.00px;height:5.20px;" viewBox="0 0 4 5.2" preserveAspectRatio="none"><path fill="#a3a3a3" d="M4,0 L4,5.2 L0,2.6 Z"/></svg>
<div class="r" style="left:83.50px;top:450.80px;width:865.50px;height:10.00px;background:#c1c1c1"></div>
<div class="r" style="left:58.40px;top:478.40px;width:601.00px;height:141.60px;background:#fff;border-radius:3px;box-shadow:0 0 1.5px rgba(0,0,0,0.07)"></div>
<div class="r" style="left:682.40px;top:478.60px;width:600.20px;height:103.20px;background:#fff;border-radius:3px;box-shadow:0 0 1.5px rgba(0,0,0,0.07)"></div>
<div class="t" style="left:63.60px;top:486.01px;font-size:12.25px;font-weight:bold;font-style:normal;color:#337ab7;">Hourly Amounts</div>
<div class="t" style="left:686.60px;top:486.01px;font-size:12.25px;font-weight:bold;font-style:normal;color:#337ab7;">Flat Amounts</div>
<div class="t" style="left:75.00px;top:517.38px;font-size:8.75px;font-weight:bold;font-style:normal;color:#3a3a3a;">Pay Code</div>
<div class="t" style="left:212.80px;top:517.38px;font-size:8.75px;font-weight:bold;font-style:normal;color:#3a3a3a;">Reg Hrs</div>
<div class="t" style="left:332.20px;top:517.38px;font-size:8.75px;font-weight:bold;font-style:normal;color:#3a3a3a;">OT 1</div>
<div class="t" style="left:410.50px;top:517.38px;font-size:8.75px;font-weight:bold;font-style:normal;color:#3a3a3a;">OT 2</div>
<div class="t" style="left:489.50px;top:517.38px;font-size:8.75px;font-weight:bold;font-style:normal;color:#3a3a3a;">Total Hours</div>
<div class="r" style="left:70.50px;top:531.50px;width:576.30px;height:2.00px;background:#e0e0e0"></div>
<div class="t" style="left:75.00px;top:538.38px;font-size:8.75px;font-weight:normal;font-style:normal;color:#333;">Holiday</div>
<div class="t" style="left:212.80px;top:538.38px;font-size:8.75px;font-weight:normal;font-style:normal;color:#333;">8.00</div>
<div class="t" style="left:332.20px;top:538.38px;font-size:8.75px;font-weight:normal;font-style:normal;color:#333;">0.08</div>
<div class="t" style="left:410.50px;top:538.38px;font-size:8.75px;font-weight:normal;font-style:normal;color:#333;">0.00</div>
<div class="t" style="left:489.50px;top:538.38px;font-size:8.75px;font-weight:normal;font-style:normal;color:#333;">8.08</div>
<div class="t" style="left:75.00px;top:559.58px;font-size:8.75px;font-weight:normal;font-style:normal;color:#333;">Regular</div>
<div class="t" style="left:212.80px;top:559.58px;font-size:8.75px;font-weight:normal;font-style:normal;color:#333;">16.08</div>
<div class="t" style="left:332.20px;top:559.58px;font-size:8.75px;font-weight:normal;font-style:normal;color:#333;">0.00</div>
<div class="t" style="left:410.50px;top:559.58px;font-size:8.75px;font-weight:normal;font-style:normal;color:#333;">0.00</div>
<div class="t" style="left:489.50px;top:559.58px;font-size:8.75px;font-weight:normal;font-style:normal;color:#333;">16.08</div>
<div class="t" style="left:75.00px;top:580.18px;font-size:8.75px;font-weight:normal;font-style:normal;color:#333;">Total</div>
<div class="t" style="left:212.80px;top:580.18px;font-size:8.75px;font-weight:normal;font-style:normal;color:#333;">24.08</div>
<div class="t" style="left:332.20px;top:580.18px;font-size:8.75px;font-weight:normal;font-style:normal;color:#333;">0.08</div>
<div class="t" style="left:410.50px;top:580.18px;font-size:8.75px;font-weight:normal;font-style:normal;color:#333;">0.00</div>
<div class="t" style="left:489.50px;top:580.18px;font-size:8.75px;font-weight:normal;font-style:normal;color:#333;">24.17</div>
<div class="r" style="left:70.50px;top:554.00px;width:576.30px;height:1.00px;background:#dddddd"></div>
<div class="r" style="left:70.50px;top:575.00px;width:576.30px;height:1.00px;background:#dddddd"></div>
<div class="t" style="left:698.10px;top:517.38px;font-size:8.75px;font-weight:bold;font-style:normal;color:#3a3a3a;">Pay Code</div>
<div class="t" style="left:866.80px;top:517.38px;font-size:8.75px;font-weight:bold;font-style:normal;color:#3a3a3a;">Qty</div>
<div class="t" style="left:954.90px;top:517.38px;font-size:8.75px;font-weight:bold;font-style:normal;color:#3a3a3a;">Rate</div>
<div class="t" style="left:1049.30px;top:517.38px;font-size:8.75px;font-weight:bold;font-style:normal;color:#3a3a3a;">Total Amount</div>
<div class="r" style="left:694.40px;top:531.50px;width:575.60px;height:2.00px;background:#e0e0e0"></div>
<div class="t" style="left:698.10px;top:538.38px;font-size:8.75px;font-weight:normal;font-style:normal;color:#333;">Total</div>
<div class="t" style="left:866.80px;top:538.38px;font-size:8.75px;font-weight:normal;font-style:normal;color:#333;">0.00</div>
<div class="t" style="left:1049.30px;top:538.38px;font-size:8.75px;font-weight:normal;font-style:normal;color:#333;">0.00</div>
</body></html>
